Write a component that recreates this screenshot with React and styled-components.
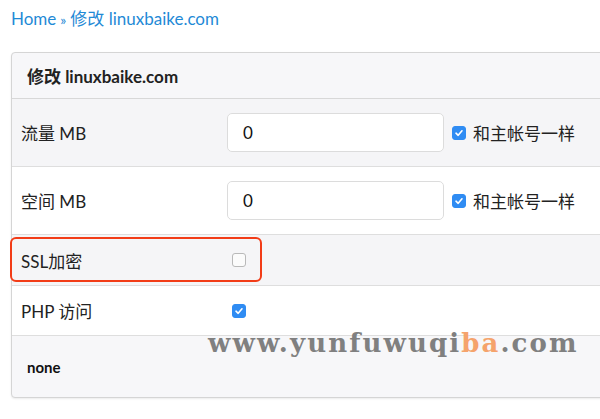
import React from "react";
import styled, { createGlobalStyle } from "styled-components";

const GlobalStyle = createGlobalStyle`
  html, body {
    margin: 0;
    padding: 0;
    background: #fff;
    overflow: hidden;
  }
  body {
    font-family: Lato, "Noto Sans CJK SC", sans-serif;
    color: #222;
  }
`;

const Page = styled.div`
  position: relative;
  width: 600px;
  height: 419px;
  overflow: hidden;
`;

const Breadcrumb = styled.div`
  padding: 5px 0 0 11px;
  height: 52px;
  box-sizing: border-box;
  font-size: 17px;
  color: #1f8ad6;

  a {
    color: #1f8ad6;
    text-decoration: none;
  }

  span {
    margin: 0 4px;
    font-size: 14px;
  }
`;

const Panel = styled.div`
  margin-left: 11px;
  width: 620px;
  border: 1px solid #d5d5d5;
  border-radius: 4px;
  background: #f7f7f9;
  box-shadow: 0 1px 2px rgba(0, 0, 0, 0.08);
  overflow: hidden;
`;

const PanelHeader = styled.div`
  height: 45px;
  display: flex;
  align-items: center;
  padding-left: 15px;
  font-size: 17px;
  font-weight: 700;
  border-bottom: 1px solid #d8d8d8;
`;

const Row = styled.div`
  display: grid;
  grid-template-columns: 205px 1fr;
  align-items: center;
  box-sizing: border-box;
  height: ${(p) => p.$h}px;
  background: ${(p) => (p.$striped ? "#f5f5f7" : "#fff")};
  border-bottom: 1px solid #dedede;
`;

const Label = styled.div`
  padding-left: 9px;
  font-size: 17px;
  color: #222;
`;

const Field = styled.div`
  display: flex;
  align-items: center;
  padding-left: 10px;
`;

const TextInput = styled.div`
  width: 217px;
  height: 39px;
  box-sizing: border-box;
  border: 1px solid #dcdcdc;
  border-radius: 5px;
  background: #fff;
  display: flex;
  align-items: center;
  padding-left: 15px;
  font-size: 17px;
  color: #111;
`;

const Box = styled.span`
  display: inline-flex;
  align-items: center;
  justify-content: center;
  width: 14px;
  height: 14px;
  box-sizing: border-box;
  border-radius: 3px;
  margin-left: ${(p) => p.$ml}px;
  background: ${(p) => (p.$on ? "#2f8cf3" : "#fbfbfb")};
  border: 1px solid ${(p) => (p.$on ? "#2f8cf3" : "#b9b9b9")};
`;

const Same = styled.span`
  margin-left: 7px;
  font-size: 17px;
  color: #222;
`;

const Footer = styled.div`
  height: 61px;
  display: flex;
  align-items: center;
  padding-left: 15px;
  font-size: 15px;
  font-weight: 700;
  color: #111;
`;

const Highlight = styled.div`
  position: absolute;
  left: 10px;
  top: 237px;
  width: 252px;
  height: 45px;
  box-sizing: border-box;
  border: 2.5px solid #f23c17;
  border-radius: 6px;
  pointer-events: none;
`;

const Watermark = styled.div`
  position: absolute;
  left: 208px;
  top: 328px;
  font-family: "DejaVu Serif", serif;
  font-weight: 700;
  font-size: 26px;
  letter-spacing: 2.1px;
  color: #808080;
  white-space: nowrap;

  b {
    color: #f5a36c;
  }
`;

const Check = ({ on, ml = 0 }) => (
  <Box $on={on} $ml={ml}>
    {on && (
      <svg width="10" height="10" viewBox="0 0 10 10">
        <path d="M2 5.2 L4.2 7.3 L8 2.8" fill="none" stroke="#fff" strokeWidth="1.6" strokeLinecap="round" strokeLinejoin="round" />
      </svg>
    )}
  </Box>
);

const App = () => {
  return (
    <Page>
      <GlobalStyle />
      <Breadcrumb>
        <a href="#">Home</a>
        <span>»</span>
        <a href="#">修改 linuxbaike.com</a>
      </Breadcrumb>
      <Panel>
        <PanelHeader>修改 linuxbaike.com</PanelHeader>
        <Row $h={68} $striped>
          <Label>流量 MB</Label>
          <Field>
            <TextInput>0</TextInput>
            <Check on ml={8} />
            <Same>和主帐号一样</Same>
          </Field>
        </Row>
        <Row $h={68}>
          <Label>空间 MB</Label>
          <Field>
            <TextInput>0</TextInput>
            <Check on ml={8} />
            <Same>和主帐号一样</Same>
          </Field>
        </Row>
        <Row $h={51} $striped>
          <Label>SSL加密</Label>
          <Field>
            <Check ml={5} />
          </Field>
        </Row>
        <Row $h={50}>
          <Label>PHP 访问</Label>
          <Field>
            <Check on ml={5} />
          </Field>
        </Row>
        <Footer>none</Footer>
      </Panel>
      <Highlight />
      <Watermark>
        www.yunfuwuqi<b>ba</b>.com
      </Watermark>
    </Page>
  );
};

export default App;
